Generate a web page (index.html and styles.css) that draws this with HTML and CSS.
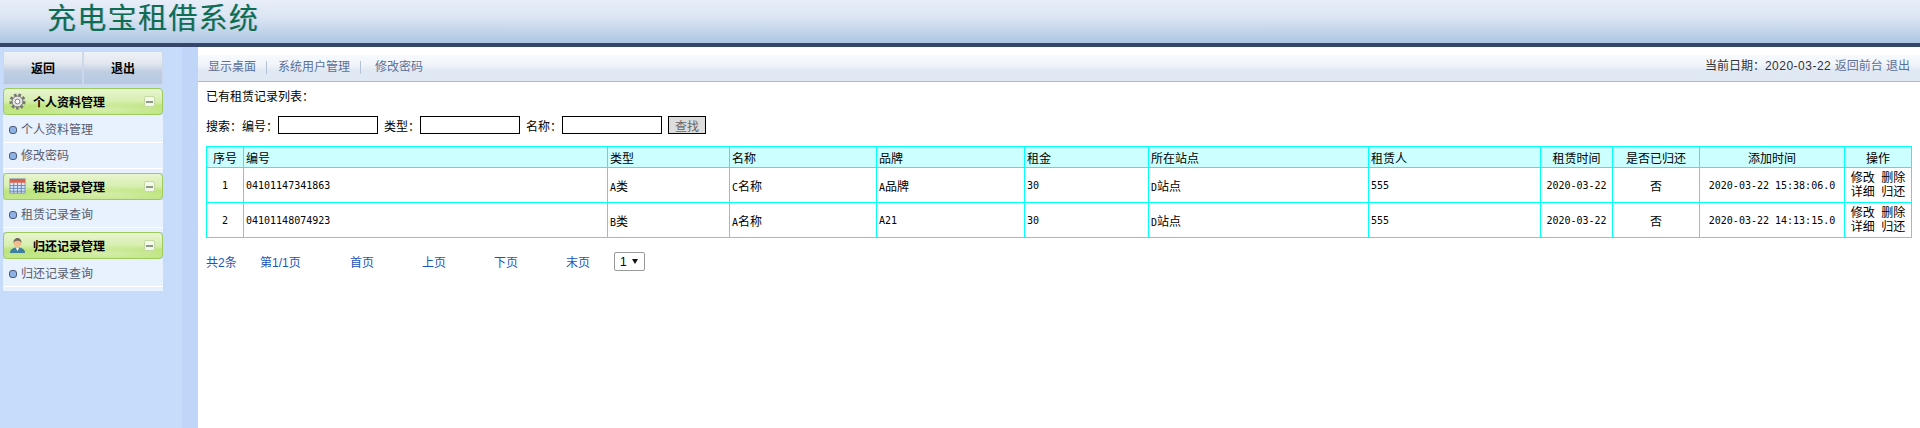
FILE: index.html
```html
<!DOCTYPE html>
<html lang="zh-CN">
<head>
    <meta charset="UTF-8">
    <title>充电宝租借系统</title>
    <link rel="stylesheet" href="styles.css">
</head>
<body>
    <div class="top">
        <h1 class="logo">充电宝租借系统</h1>
    </div>

    <div class="page">
        <div class="side">
            <div class="side-btns">
                <a class="side-btn">返回</a>
                <a class="side-btn">退出</a>
            </div>

            <div class="menu-title">
                <svg class="menu-icon" viewBox="0 0 18 18">
                    <circle cx="9" cy="9" r="6.800" fill="none" stroke="#777" stroke-width="3.600" stroke-dasharray="2.600 2"/>
                    <circle cx="9" cy="9" r="5.800" fill="#e8e8e8" stroke="#666" stroke-width="1"/>
                    <circle cx="9" cy="9" r="2.600" fill="#fff" stroke="#777" stroke-width="1"/>
                </svg>
                <span class="menu-name">个人资料管理</span>
                <span class="menu-toggle"></span>
            </div>
            <div class="menu-list">
                <a class="menu-item">个人资料管理</a>
                <a class="menu-item">修改密码</a>
            </div>

            <div class="menu-title">
                <svg class="menu-icon" viewBox="0 0 18 18">
                    <rect x="1" y="1" width="16" height="15" fill="#dfe9f8" stroke="#7f93b5"/>
                    <rect x="1" y="1" width="16" height="4" fill="#d9614c"/>
                    <path d="M1 8h16M1 11h16M1 14h16M5 5v11M9 5v11M13 5v11" stroke="#5e86c4" stroke-width="1"/>
                </svg>
                <span class="menu-name">租赁记录管理</span>
                <span class="menu-toggle"></span>
            </div>
            <div class="menu-list">
                <a class="menu-item">租赁记录查询</a>
            </div>

            <div class="menu-title">
                <svg class="menu-icon" viewBox="0 0 18 18">
                    <path d="M1 17c0-4 3-6 8-6s8 2 8 6z" fill="#3f7f9e"/>
                    <path d="M7 11l2 4 2-4z" fill="#f2f2f2"/>
                    <circle cx="9" cy="6.500" r="4" fill="#f0bd8c"/>
                    <path d="M4.800 6.500C4.500 2.500 7 1 9 1s4.500 1.500 4.200 5.500C12.500 4.500 11 4 9 4S5.500 4.500 4.800 6.500z" fill="#6b6660"/>
                </svg>
                <span class="menu-name">归还记录管理</span>
                <span class="menu-toggle"></span>
            </div>
            <div class="menu-list">
                <a class="menu-item">归还记录查询</a>
            </div>
        </div>

        <div class="main">
            <div class="nav">
                <a class="nav-link">显示桌面</a>
                <a class="nav-link">系统用户管理</a>
                <a class="nav-link">修改密码</a>
                <div class="nav-right">当前日期：<span class="nav-date">2020-03-22</span> <a class="nav-blue">返回前台</a> <a class="nav-blue">退出</a></div>
            </div>

            <div class="content">
                <p class="list-title">已有租赁记录列表：</p>
                <form class="search">
                    <span>搜索：</span>
                    <span>编号：</span><input type="text" class="search-input">
                    <span>类型：</span><input type="text" class="search-input">
                    <span>名称：</span><input type="text" class="search-input">
                    <button type="button" class="search-btn">查找</button>
                </form>

                <table class="records">
                    <colgroup>
                        <col class="c1"><col class="c2"><col class="c3"><col class="c4"><col class="c5"><col class="c6"><col class="c7"><col class="c8"><col class="c9"><col class="c10"><col class="c11"><col class="c12">
                    </colgroup>
                    <tr class="head">
                        <td class="mid">序号</td>
                        <td>编号</td>
                        <td>类型</td>
                        <td>名称</td>
                        <td>品牌</td>
                        <td>租金</td>
                        <td>所在站点</td>
                        <td>租赁人</td>
                        <td class="mid">租赁时间</td>
                        <td class="mid">是否已归还</td>
                        <td class="mid">添加时间</td>
                        <td class="mid">操作</td>
                    </tr>
                    <tr>
                        <td class="mid"><span class="num">1</span></td>
                        <td><span class="num">04101147341863</span></td>
                        <td><span class="num">A</span>类</td>
                        <td><span class="num">C</span>名称</td>
                        <td><span class="num">A</span>品牌</td>
                        <td><span class="num">30</span></td>
                        <td><span class="num">D</span>站点</td>
                        <td><span class="num">555</span></td>
                        <td class="mid"><span class="num">2020-03-22</span></td>
                        <td class="mid">否</td>
                        <td class="mid"><span class="num">2020-03-22 15:38:06.0</span></td>
                        <td class="mid ops">修改&nbsp;&nbsp;删除<br>详细&nbsp;&nbsp;归还</td>
                    </tr>
                    <tr>
                        <td class="mid"><span class="num">2</span></td>
                        <td><span class="num">04101148074923</span></td>
                        <td><span class="num">B</span>类</td>
                        <td><span class="num">A</span>名称</td>
                        <td><span class="num">A21</span></td>
                        <td><span class="num">30</span></td>
                        <td><span class="num">D</span>站点</td>
                        <td><span class="num">555</span></td>
                        <td class="mid"><span class="num">2020-03-22</span></td>
                        <td class="mid">否</td>
                        <td class="mid"><span class="num">2020-03-22 14:13:15.0</span></td>
                        <td class="mid ops">修改&nbsp;&nbsp;删除<br>详细&nbsp;&nbsp;归还</td>
                    </tr>
                </table>

                <div class="pager">
                    <a class="pager-total">共2条</a>
                    <a class="pager-page">第1/1页</a>
                    <a class="pager-link">首页</a>
                    <a class="pager-link">上页</a>
                    <a class="pager-link">下页</a>
                    <a class="pager-last">末页</a>
                    <div class="pager-box">
                        <select class="pager-select"><option>1</option></select>
                    </div>
                </div>
            </div>
        </div>
    </div>
</body>
</html>
```

FILE: styles.css
```css
* {
    box-sizing: border-box;
}

html, body {
    height: 100%;
}

body {
    margin: 0;
    font-family: "Liberation Sans", "Noto Sans CJK SC", sans-serif;
    font-size: 12px;
    color: #000;
    background-color: #fff;
    display: flex;
    flex-direction: column;
}

.top {
    height: 47px;
    padding-left: 47px;
    background: linear-gradient(#e8eef8, #dbe5f3 40%, #aec6e2);
    border-bottom: 4px solid #34476b;
}

.logo {
    margin: 0;
    font-family: "Noto Sans CJK SC", serif;
    font-size: 29px;
    font-weight: 400;
    line-height: 33px;
    letter-spacing: 1.3px;
    color: #0d6d52;
    text-shadow: 1px 0 0 rgba(60, 100, 140, 0.3);
}

.page {
    flex: 1;
    display: flex;
}

.side {
    width: 198px;
    padding: 4px 0 0 3px;
    background: linear-gradient(to right, #c7dcfb 182px, #bfd6f8 182px);
}

.side-btns {
    display: flex;
    width: 160px;
    margin-bottom: 3px;
}

.side-btn {
    width: 80px;
    height: 34px;
    line-height: 34px;
    text-align: center;
    font-weight: bold;
    border: 1px solid #ccd8ea;
    background: linear-gradient(#eef1f6, #e3e8ef 35%, #c0cfe2 60%, #b5c9e3);
}

.menu-title {
    display: flex;
    align-items: center;
    width: 160px;
    height: 27px;
    padding: 0 7px 0 5px;
    font-weight: bold;
    border: 1px solid #9ecb5c;
    border-radius: 4px;
    background: radial-gradient(ellipse 70px 7px at 95px 20px, rgba(255, 255, 255, 0.35), transparent),
        linear-gradient(#e9f5d0, #d6eeae 50%, #bde47c 68%, #c3e78a);
}

.menu-icon {
    width: 17px;
    height: 17px;
}

.menu-name {
    flex: 1;
    margin-left: 7px;
}

.menu-toggle {
    width: 11px;
    height: 11px;
    border: 1px solid #c5d8a6;
    border-radius: 2px;
    background: linear-gradient(#8d9c86, #8d9c86) center / 7px 2px no-repeat, #f4f9ea;
}

.menu-list {
    width: 160px;
    padding: 2px 0 4px;
    background-color: #e8f1fe;
}

.menu-item {
    display: block;
    position: relative;
    height: 26px;
    line-height: 27px;
    padding-left: 18px;
    color: #555c6e;
    border-bottom: 1px solid #fff;
}

.menu-item::before {
    content: "";
    position: absolute;
    left: 6px;
    top: 9px;
    width: 6px;
    height: 6px;
    border: 1px solid #4a5a78;
    border-radius: 3px;
    background-color: #8fb2e6;
}

.main {
    flex: 1;
    padding-top: 8px;
}

.nav {
    display: flex;
    align-items: center;
    height: 27px;
    padding: 0 10px 1px 10px;
    border-bottom: 1px solid #a4bad6;
    background: linear-gradient(#f6f9fd, #f2f6fb 35%, #dfe8f3 60%, #dfe8f3);
}

.nav-link {
    color: #5a6f99;
    line-height: 13px;
    padding-right: 10px;
    margin-right: 11px;
    border-right: 1px solid #b3c3d8;
}

.nav-link:nth-child(2) {
    margin-right: 14px;
}

.nav-link:nth-child(3) {
    border-right: 0;
}

.nav-right {
    margin-left: auto;
    margin-top: -6px;
    color: #333;
}

.nav-date {
    letter-spacing: 0.5px;
}

.nav-blue {
    color: #5a6f99;
}

.content {
    padding: 7px 8px 0;
}

.list-title {
    margin: 0;
    line-height: 16px;
}

.search {
    display: flex;
    align-items: center;
    height: 18px;
    margin-top: 11px;
}

.search-input {
    width: 100px;
    height: 18px;
    padding: 0;
    margin-right: 6px;
    border: 1px solid #000;
}

.search-btn {
    width: 38px;
    height: 18px;
    padding: 0;
    font: inherit;
    color: #666;
    border: 1px solid #000;
    background-color: #ddd;
}

.records {
    width: 1705px;
    margin-top: 12px;
    border-collapse: collapse;
    table-layout: fixed;
}

.records td {
    padding: 0 2px;
    border: 1px solid #00ffff;
    height: 35px;
}

.records .head td {
    height: 21px;
    background-color: #ccffff;
}

.records .mid {
    text-align: center;
}

.num {
    font-family: "DejaVu Sans Mono", monospace;
    font-size: 10px;
}

.ops {
    line-height: 14px;
    padding-top: 1px;
}

.c1 { width: 37px; }
.c2 { width: 364px; }
.c3 { width: 122px; }
.c4 { width: 147px; }
.c5 { width: 148px; }
.c6 { width: 124px; }
.c7 { width: 220px; }
.c8 { width: 172px; }
.c9 { width: 72px; }
.c10 { width: 87px; }
.c11 { width: 145px; }
.c12 { width: 67px; }

.pager {
    display: flex;
    align-items: center;
    margin-top: 14px;
    color: #1a56b8;
}

.pager-total { width: 54px; }
.pager-page { width: 90px; }
.pager-link { width: 72px; }
.pager-last { width: 48px; }

.pager-box {
    position: relative;
    width: 31px;
    height: 19px;
}

.pager-box::after {
    content: "";
    position: absolute;
    left: 18px;
    top: 7px;
    border-top: 5px solid #111;
    border-left: 3px solid transparent;
    border-right: 3px solid transparent;
}

.pager-select {
    appearance: none;
    width: 31px;
    height: 19px;
    padding: 0 0 0 5px;
    font: inherit;
    color: #000;
    background-color: #fff;
    border: 1px solid #999;
    border-radius: 2px;
}
```
